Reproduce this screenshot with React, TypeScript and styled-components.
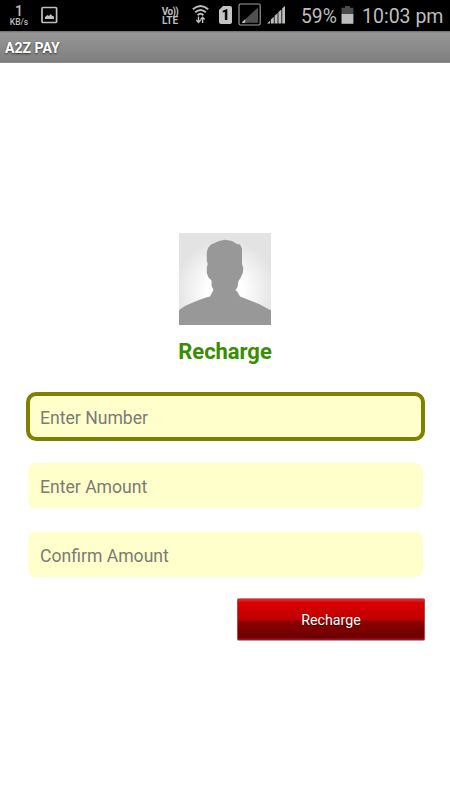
import React from "react";
import styled, { createGlobalStyle } from "styled-components";

const GlobalStyle = createGlobalStyle`
  *, *::before, *::after { box-sizing: border-box; }
  body { margin: 0; background: #fff; font-family: Roboto, sans-serif; }
`;

const Screen = styled.div`
  display: flex;
  flex-direction: column;
  width: 450px;
  height: 800px;
  background: #fff;
  overflow: hidden;
`;

const StatusBar = styled.header`
  display: flex;
  align-items: flex-start;
  height: 31px;
  background: #000;
  color: #bdbdbd;
  white-space: nowrap;
`;

const Slot = styled.div<{ $w: number; $gap: number }>`
  flex: none;
  width: ${(p) => p.$w}px;
  margin-left: ${(p) => p.$gap}px;
  height: 31px;
  svg { display: block; }
`;

const Stack = styled(Slot)`
  display: flex;
  flex-direction: column;
  align-items: center;
  padding-top: 4px;
`;

const Rate = styled.span`
  font-size: 14px;
  line-height: 14px;
  font-weight: 500;
`;

const Unit = styled.span`
  font-size: 8.5px;
  line-height: 8px;
  font-weight: 500;
`;

const VoLabel = styled.span`
  font-size: 10px;
  line-height: 10px;
  margin-top: 3px;
  font-weight: 700;
  letter-spacing: -0.6px;
`;

const LteLabel = styled.span`
  font-size: 10px;
  line-height: 8px;
  font-weight: 700;
`;

const SimCard = styled.div`
  width: 13px;
  height: 18px;
  margin-top: 6px;
  border-radius: 2px;
  background: #c4c4c4;
  clip-path: polygon(4px 0, 100% 0, 100% 100%, 0 100%, 0 4px);
  color: #000;
  font-size: 14px;
  line-height: 18px;
  font-weight: 900;
  text-align: center;
`;

const StatusText = styled(Slot)<{ $size: number; $line: number }>`
  font-size: ${(p) => p.$size}px;
  line-height: ${(p) => p.$line}px;
`;

const TitleBar = styled.div`
  display: flex;
  align-items: center;
  height: 32px;
  padding: 2px 5px 0;
  background: linear-gradient(#6c6c6c 0, #969696 2px, #808080 30px, #777 31px, #a2a2a2 32px);
`;

const Title = styled.h1`
  margin: 0;
  color: #fff;
  font-size: 14px;
  line-height: 18px;
  font-weight: 700;
  letter-spacing: 0.05px;
  text-shadow: 0 1px 2px #333;
`;

const Content = styled.main`
  display: flex;
  flex-direction: column;
  align-items: center;
  padding: 170px 25px 0;
`;

const Avatar = styled.svg`
  display: block;
  width: 92px;
  height: 92px;
`;

const Heading = styled.h2`
  margin: 13px 0 26px;
  color: #388e00;
  font-size: 22px;
  line-height: 28px;
  font-weight: 700;
  letter-spacing: -0.05px;
`;

const Form = styled.form`
  display: flex;
  flex-direction: column;
  width: 399px;
  margin-left: 1px;
`;

const Field = styled.input<{ $active?: boolean; $top?: number }>`
  display: block;
  width: ${(p) => (p.$active ? 399 : 395)}px;
  height: ${(p) => (p.$active ? 49 : 45)}px;
  margin: ${(p) => p.$top ?? 0}px 0 0 ${(p) => (p.$active ? 0 : 2)}px;
  padding: ${(p) => (p.$active ? "2px 10px 0" : "2px 12px 0")};
  border: ${(p) => (p.$active ? "4px solid #808000" : "0")};
  border-radius: ${(p) => (p.$active ? 10 : 8)}px;
  outline: none;
  background: #ffffcc;
  color: #333;
  font: 17.6px/24px Roboto, sans-serif;
  &::placeholder { color: #7b7b75; opacity: 1; }
`;

const Submit = styled.button`
  align-self: flex-end;
  width: 188px;
  height: 43px;
  margin-top: 21px;
  padding: 1px 0 0;
  border: 1px solid #b84850;
  border-top-color: #b69191;
  border-bottom-color: #b995a0;
  border-radius: 2px;
  background: linear-gradient(#dd2020 0 2px, #da0000 3px, #bd0000 21px, #900000 22px, #690000 39px, #9c1022 40px);
  color: #fff;
  font: 14.2px/20px Roboto, sans-serif;
  text-shadow: 0 1px 1px #400;
`;

const PictureIcon = () => (
  <svg width="17" height="31" viewBox="0 0 17 31" fill="none">
    <rect x="1" y="7.5" width="14.6" height="15" rx="1" stroke="#c0c0c0" strokeWidth="1.7" />
    <path d="M4 19v-2l2.5-2 1.5 1 1.8-2 1.4 1.8 1.8.6V19z" fill="#c0c0c0" />
  </svg>
);

const WifiIcon = () => (
  <svg width="18" height="31" viewBox="0 0 18 31" fill="none" stroke="#bdbdbd" strokeWidth="1.9">
    <path d="M.8 9.2q7.7-6.6 15.4 0M3.2 12.3q5.3-4.7 10.6 0M5.6 15.2q2.9-2.8 5.8 0" />
    <path d="M6.5 16.5v5.8M4.3 20l2.2 2.5L8.7 20M10.6 23v-5.5M8.6 19.5l2-2.3 2 2.3" strokeWidth="1.4" />
  </svg>
);

const EmptySignalIcon = () => (
  <svg width="23" height="31" viewBox="0 0 23 31">
    <rect x="1" y="4" width="21.2" height="21" rx="1.6" fill="none" stroke="#a2a2a2" strokeWidth="1.1" />
    <path d="M3.5 22.8 20 7.4v15.4z" fill="#505050" />
    <path d="M3.5 22.8 7.2 19.3v3.5z" fill="#d0d0d0" />
  </svg>
);

const SignalIcon = () => (
  <svg width="19" height="31" viewBox="0 0 19 31" fill="#bdbdbd">
    <path d="M0 23.5 3 20.8v2.7zM3.8 19.5l3-2.7v6.7h-3zM7.6 15.7l3-2.6v10.4h-3zM11.4 12l3-2.6v14.1h-3zM15.2 8.2 18 5.9v17.6h-2.8z" />
  </svg>
);

const BatteryIcon = () => (
  <svg width="13" height="31" viewBox="0 0 13 31">
    <path d="M4 6h5v1.7h3.4V14H.5V7.7H4z" fill="#4b4b4b" />
    <path d="M.5 14h11.9v9.8H.5z" fill="#bdbdbd" />
  </svg>
);

const Portrait = () => (
  <Avatar viewBox="0 0 92 92">
    <defs>
      <radialGradient id="glow" cx=".5" cy=".62" r=".55">
        <stop offset=".35" stopColor="#fff" />
        <stop offset="1" stopColor="#e3e3e3" />
      </radialGradient>
    </defs>
    <path fill="url(#glow)" d="M0 0h92v92H0z" />
    <path
      fill="#989898"
      d="M0 92V77.5Q2 75 8 72L20 67L27 64.5L31 63.4L34.5 57L32.7 53L32.5 47.5L29.5 44.5L27.8 40V34L28.8 31L27.8 28V19L29 15L32 11.5L40 8L46 6.8L53 8L58 11L61 11.5L63 15.5V31L64.3 35L63.8 40L61.5 45L59.5 48L58.5 54L56.5 57L58.5 59L61 63.4L66 65.5L80 71L92 77.5V92Z"
    />
  </Avatar>
);

export default function App() {
  return (
    <>
      <GlobalStyle />
      <Screen>
        <StatusBar>
          <Stack $w={20} $gap={9}>
            <Rate>1</Rate>
            <Unit>KB/s</Unit>
          </Stack>
          <Slot $w={17} $gap={12}><PictureIcon /></Slot>
          <Stack $w={20} $gap={102}>
            <VoLabel>Vo))</VoLabel>
            <LteLabel>LTE</LteLabel>
          </Stack>
          <Slot $w={18} $gap={12}><WifiIcon /></Slot>
          <Slot $w={13} $gap={9}><SimCard>1</SimCard></Slot>
          <Slot $w={23} $gap={6}><EmptySignalIcon /></Slot>
          <Slot $w={19} $gap={6}><SignalIcon /></Slot>
          <StatusText $w={36} $gap={15} $size={19.3} $line={33}>59%</StatusText>
          <Slot $w={13} $gap={4}><BatteryIcon /></Slot>
          <StatusText $w={84} $gap={8} $size={19.5} $line={33}>10:03 pm</StatusText>
        </StatusBar>
        <TitleBar>
          <Title>A2Z PAY</Title>
        </TitleBar>
        <Content>
          <Portrait />
          <Heading>Recharge</Heading>
          <Form>
            <Field $active placeholder="Enter Number" />
            <Field $top={22} placeholder="Enter Amount" />
            <Field $top={24} placeholder="Confirm Amount" />
            <Submit type="button">Recharge</Submit>
          </Form>
        </Content>
      </Screen>
    </>
  );
}
